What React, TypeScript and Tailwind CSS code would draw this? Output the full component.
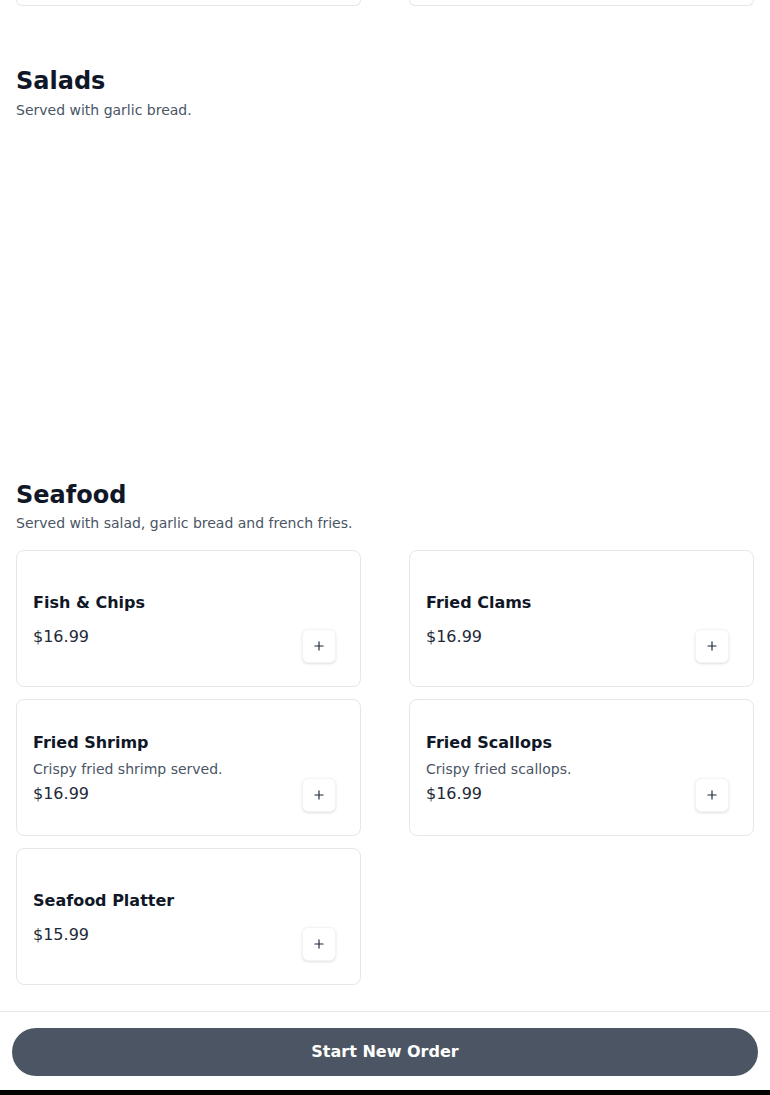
import { Plus } from "lucide-react";

type Item = { name: string; desc?: string; price: string };

const seafood: Item[] = [
  { name: "Fish & Chips", price: "$16.99" },
  { name: "Fried Clams", price: "$16.99" },
  { name: "Fried Shrimp", desc: "Crispy fried shrimp served.", price: "$16.99" },
  { name: "Fried Scallops", desc: "Crispy fried scallops.", price: "$16.99" },
  { name: "Seafood Platter", price: "$15.99" },
];

const ItemCard = ({ item }: { item: Item }) => {
  return (
    <div className="flex h-[137px] rounded-lg border border-gray-200 bg-white p-4">
      <div className="flex flex-1 flex-col justify-center pt-0.5">
        <h3 className="text-base leading-6 font-bold text-gray-900">{item.name}</h3>
        {item.desc && <p className="mt-1 text-sm leading-5 text-gray-600">{item.desc}</p>}
        <p className={(item.desc ? "mt-[3px]" : "mt-2.5") + " text-base leading-6 text-gray-800"}>{item.price}</p>
      </div>
      <div className="mx-2 mt-2 mb-[7px] self-end">
        <button className="flex h-[34px] w-[34px] items-center justify-center rounded-md border border-gray-100 bg-white shadow">
          <Plus className="h-3.5 w-3.5 text-gray-800" strokeWidth={2} />
        </button>
      </div>
    </div>
  );
};

const App = () => {
  return (
    <div className="min-h-screen bg-white font-['DejaVu_Sans',sans-serif] text-gray-900">
      <div className="px-4 pb-[110px]">
        <div className="grid grid-cols-2 gap-12">
          <div className="h-[6px] rounded-b-lg border border-t-0 border-gray-200" />
          <div className="h-[6px] rounded-b-lg border border-t-0 border-gray-200" />
        </div>

        <section className="pt-[59px]">
          <h2 className="text-2xl leading-8 font-bold text-gray-900">Salads</h2>
          <p className="mt-[3px] text-sm leading-5 text-gray-600">Served with garlic bread.</p>
          <div className="h-[359px]" />
        </section>

        <section>
          <h2 className="text-2xl leading-8 font-bold text-gray-900">Seafood</h2>
          <p className="mt-[2px] text-sm leading-5 text-gray-600">Served with salad, garlic bread and french fries.</p>
          <div className="mt-[17px] grid grid-cols-2 gap-x-12 gap-y-3">
            {seafood.map((item) => (
              <ItemCard key={item.name} item={item} />
            ))}
          </div>
        </section>
      </div>

      <div className="fixed inset-x-0 bottom-0">
        <div className="border-t border-gray-200 bg-white px-3 pt-4 pb-[14px]">
          <button className="h-12 w-full rounded-full bg-[#4b5563] text-base font-bold text-white">
            Start New Order
          </button>
        </div>
        <div className="h-[5px] bg-black" />
      </div>
    </div>
  );
};

export default App;
